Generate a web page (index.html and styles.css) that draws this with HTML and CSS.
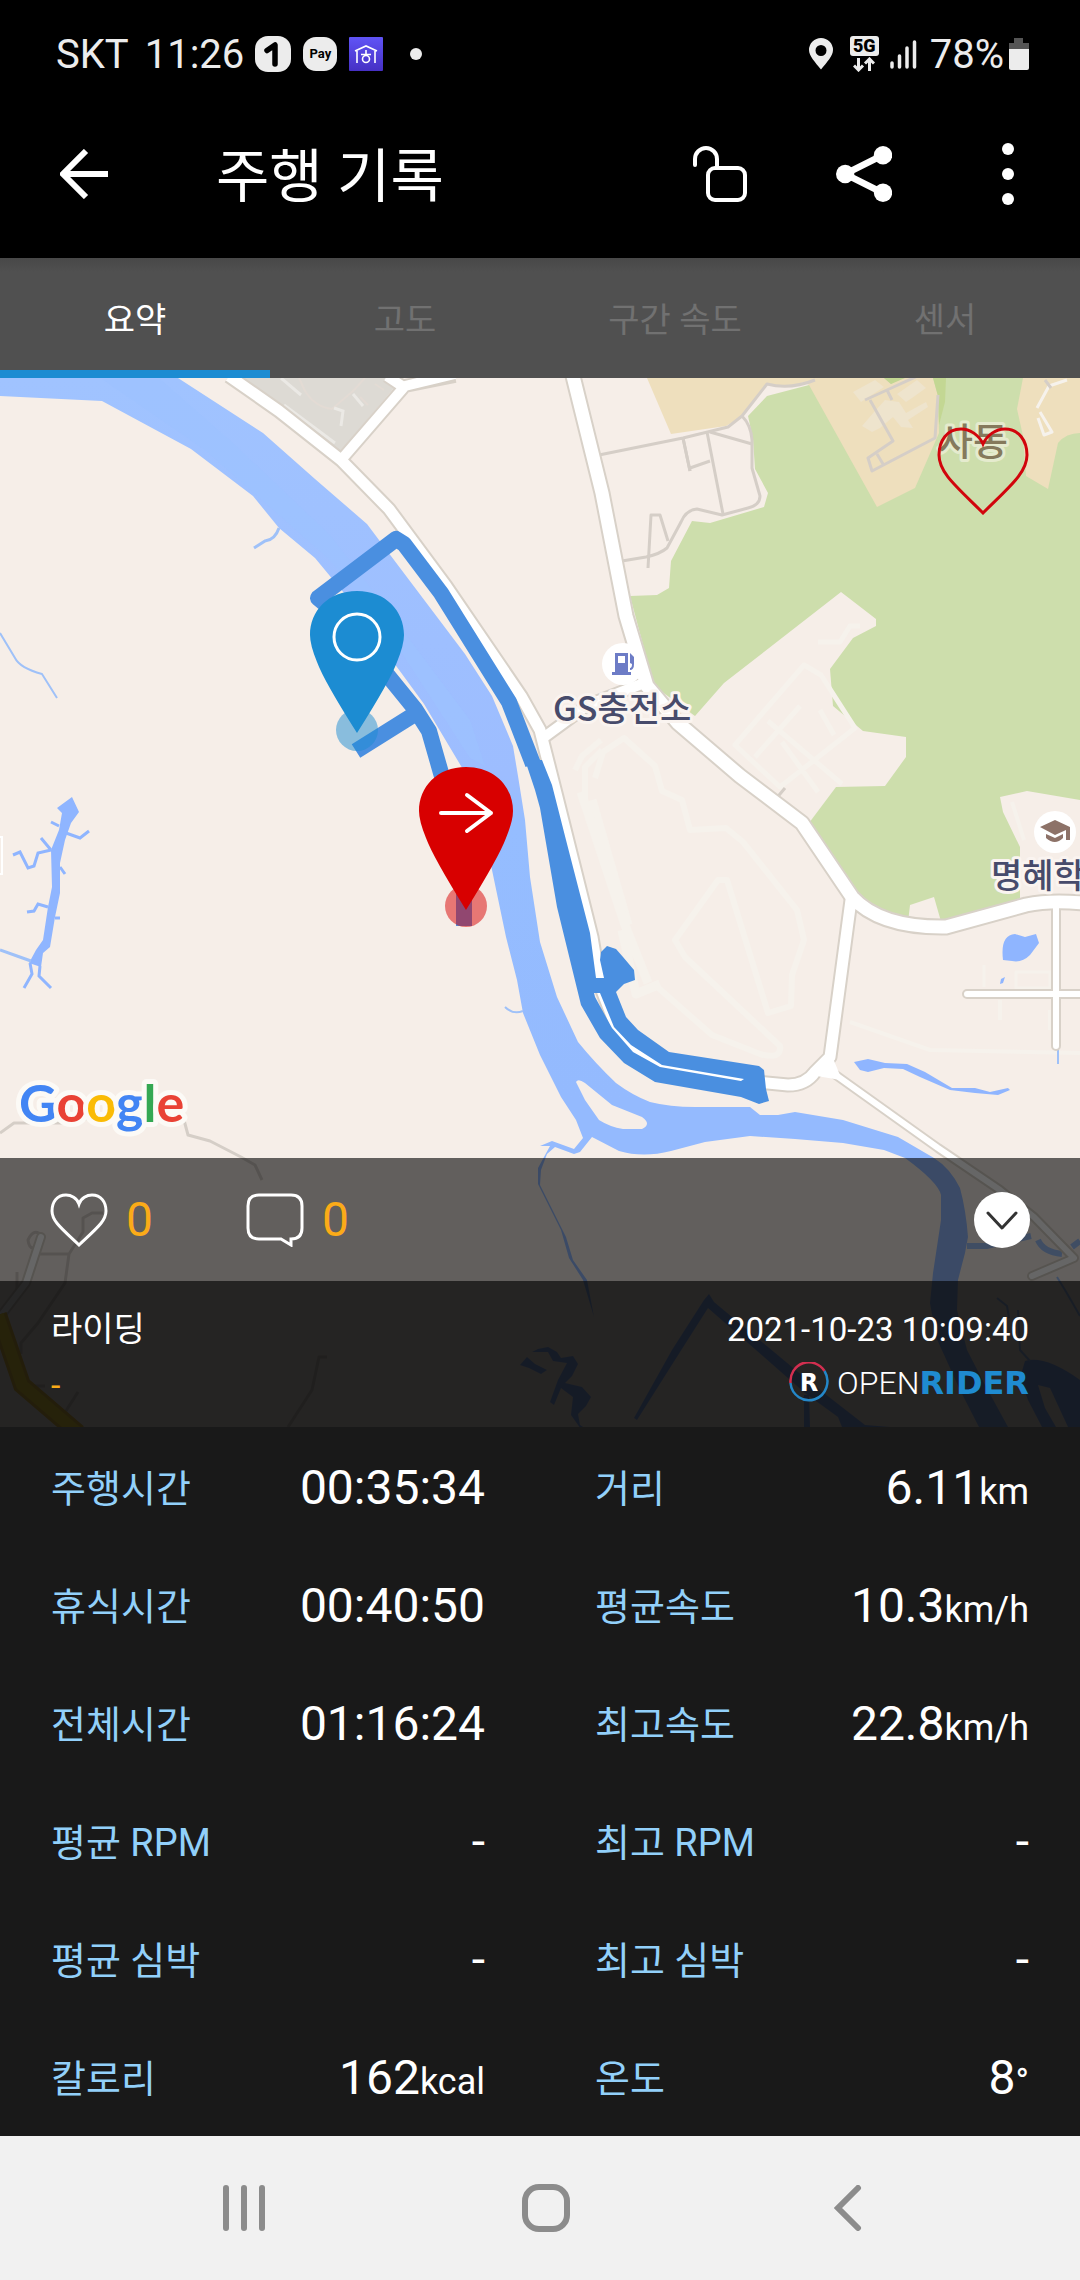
FILE: index.html
```html
<!DOCTYPE html>
<html lang="ko">
<head>
<meta charset="utf-8">
<meta name="viewport" content="width=device-width, initial-scale=1">
<title>주행 기록</title>
<link rel="stylesheet" href="styles.css">
</head>
<body>
<div class="status">
  <span>SKT</span>
  <span class="status-time">11:26</span>
  <svg class="status-app" width="36" height="36" viewBox="0 0 36 36" aria-hidden="true"><rect width="36" height="36" rx="13" fill="#ececec"/><path d="M12 14.500L20 9v19" fill="none" stroke="#000" stroke-width="5.500" stroke-linecap="round" stroke-linejoin="round"/></svg>
  <span class="pay">Pay</span>
  <svg class="status-app" width="34" height="34" viewBox="0 0 34 34" aria-hidden="true"><defs><linearGradient id="v" x2="0" y2="1"><stop stop-color="#6054f6"/><stop offset="1" stop-color="#4630c4"/></linearGradient></defs><rect width="34" height="34" rx="1" fill="url(#v)"/><path d="M6 14L17 9l11 5M8 14v12M26 14v12M17 13v4M12 17.500h10" fill="none" stroke="#fff" stroke-width="1.600"/><circle cx="17" cy="22" r="3.500" fill="none" stroke="#fff" stroke-width="1.600"/></svg>
  <span class="status-dot"></span>
  <svg class="status-loc" width="24" height="32" viewBox="0 0 24 32" aria-hidden="true"><path fill="#ececec" fill-rule="evenodd" d="M12 0a12 12 0 0 1 12 12c0 6-6 12-12 19.500C6 24 0 18 0 12A12 12 0 0 1 12 0zm0 7a5.500 5.500 0 1 0 0 11 5.500 5.500 0 0 0 0-11z"/></svg>
  <span class="network"><span class="network-type">5G</span><svg width="22" height="15" viewBox="0 0 22 15" aria-hidden="true"><path d="M5.500 1v12M1 8.500l4.500 4.500L10 8.500M16.500 14V2M12 6.500L16.500 2 21 6.500" fill="none" stroke="#ececec" stroke-width="3"/></svg></span>
  <svg class="status-signal" width="28" height="30" viewBox="0 0 28 30" aria-hidden="true"><path d="M2 24v4M9.500 17v11M17 9v19M24.500 3v25" stroke="#ececec" stroke-width="3.500" stroke-linecap="round"/></svg>
  <span class="battery-text">78%</span>
  <svg width="20" height="32" viewBox="0 0 20 32" aria-hidden="true"><path d="M5 0h9v5h6v7H0V5h5z" fill="#555"/><path d="M0 11h20v19a2 2 0 0 1-2 2H2a2 2 0 0 1-2-2z" fill="#ececec"/></svg>
</div>

<header class="appbar">
  <button class="icon-btn" aria-label="뒤로"><svg width="48" height="50" viewBox="0 0 48 50"><path d="M48 25H4M26 2L3 25l23 23" fill="none" stroke="#fff" stroke-width="6"/></svg></button>
  <h1>주행 기록</h1>
  <button class="icon-btn" aria-label="공개 설정"><svg width="54" height="56" viewBox="0 0 54 56"><g fill="none" stroke="#fff" stroke-width="4" stroke-linecap="round"><rect x="15" y="22" width="37" height="32" rx="7"/><path d="M2 19v-6a11 11 0 0 1 22 0v9"/></g></svg></button>
  <button class="icon-btn" aria-label="공유"><svg width="56" height="56" viewBox="0 0 56 56"><path d="M47 9L9 28l38 19" fill="none" stroke="#fff" stroke-width="6.500"/><g fill="#fff"><circle cx="47" cy="9.300" r="9.200"/><circle cx="9.200" cy="28" r="9.200"/><circle cx="47" cy="46.700" r="9.200"/></g></svg></button>
  <button class="icon-btn" aria-label="더보기"><svg width="12" height="62" viewBox="0 0 12 62" fill="#fff"><circle cx="6" cy="6" r="6"/><circle cx="6" cy="31" r="6"/><circle cx="6" cy="56" r="6"/></svg></button>
</header>

<nav class="tabs">
  <button class="tab active">요약</button>
  <button class="tab">고도</button>
  <button class="tab">구간 속도</button>
  <button class="tab">센서</button>
</nav>

<main class="map">
  <svg class="map-canvas" viewBox="0 378 1080 1049" preserveAspectRatio="xMidYMid slice" role="img" aria-label="주행 경로 지도">
    <defs>
      <linearGradient id="river" x1="0" y1="378" x2="0" y2="1100" gradientUnits="userSpaceOnUse"><stop stop-color="#a0c3ff"/><stop offset=".55" stop-color="#9dbdff"/><stop offset=".62" stop-color="#95bdff"/><stop offset="1" stop-color="#94bafe"/></linearGradient>
    </defs>
    <rect y="378" width="1080" height="1049" fill="#f6eee8"/>

    <!-- parks and residential blocks -->
    <path fill="#cddeac" fill-rule="evenodd" d="M748 416L767 396 809 385 820 378H1080V905L1040 905 946 927 905 922 870 908 850 885 809 823 836 787 885 786 906 757V737L863 731 833 706 830 669 853 638 876 626V619L841 592 724 683 695 716 654 686 630 596 657 595 669 588 671 561 692 521 710 523 764 507 768 493 755 469 753 439z"/>
    <path fill="#f6eee8" d="M1000 797L1027 791 1080 800V905H1020V847L1003 812zM908 922L910 905 934 897 942 925z"/>
    <g fill="#eedfbd">
      <path d="M647 378L671 434 726 426 743 416 767 384 790 387 815 378z"/>
      <path d="M795 378L809 385 877 507 915 488 939 433 938 396 933 378H902L891 384 884 378z"/>
      <path d="M1023 378L1017 409 1023 436 1026 476 1048 489 1058 443Q1066 433 1080 433V378z"/>
    </g>
    <path fill="#c3d793" d="M933 378H946L945 402 939 425 938 396zM884 378H905L891 384z"/>
    <path fill="#dddad4" d="M238 378H386L394 388 339 453 275 406z"/>
    <g fill="#eee4cd"><path d="M853 392L875 380 884 387 861 402zM897 394L917 380 926 388 912 398 906 402zM885 400L899 402 906 413 926 402 928 407 908 420 913 428 901 427 893 417 880 428 872 432 862 426 874 412z"/></g>
    <g fill="none" stroke="#e3dbd4" stroke-width="2"><path d="M299 378L305 391Q315 407 332 409M332 409L353 391 365 378M360 397l8 8M375 384l9 6"/><path stroke="#ebe9e5" stroke-width="3" d="M334 408l9 3-2 15M353 394l10 12M281 378l20 17M284 405L335 443"/></g>

    <!-- faint service roads -->
    <g fill="none" stroke="#f6f2ec" stroke-width="9" stroke-linejoin="round">
      <path d="M592 800L628 925"/><path d="M581 792L625 925 648 983 M622 930l14 64 24-10"/>
      <path d="M595 778L603 752 624 738 655 766 662 791 682 800 690 830 726 828 743 842 797 910 804 940 792 975 791 1006 768 1013 727 880 718 880 675 940 685 957 780 1046 Q782 1060 760 1054L712 1035 655 985" stroke-width="6"/>
      <path d="M575 770L582 756 601 740M585 800V767L602 750" stroke-width="6"/>
      <path d="M804 665L735 745 780 787 855 728 821 675zM755 757L800 706M768 721L842 784M782 742l36 50M820 710l14 25M818 642h22l10-16h10" stroke-width="5"/>
      <path d="M1012 802L1024 840M1000 1000v20M1050 1010v20M850 1022L930 1050 1080 1053" stroke-width="4"/>
      <path d="M1016 972h34v16h-34zM984 965v22M1038 418l6 17 8-3-12-20M1037 408l12-22 18-6" stroke-width="3"/>
    </g>

    <!-- river and ponds -->
    <path fill="url(#river)" fill-rule="evenodd" d="M0 378H178L263 433 315 479 367 524 391 556 465 654 492 696 513 746 518 776 525 820 530 877 540 942 557 997 578 1042Q595 1063 616 1083 632 1095 650 1102 670 1107 695 1107H750L760 1115 778 1115 795 1112 843 1120 898 1137 934 1158Q950 1168 960 1188 966 1210 968 1237L965 1253 958 1280 957 1310 967 1350 984 1383 1008 1427H979L960 1390 936 1337 930 1303 933 1273 941 1220V1195Q938 1182 905 1158L884 1150 843 1143 795 1139 750 1136 705 1142 671 1151Q643 1158 619 1151L592 1137 580 1152 574 1154 555 1147 547 1154 541 1170 540 1185 566 1237 573 1260 587 1280 594 1317 583 1280 569 1258 561 1230 538 1184V1168L550 1146 540 1146 552 1141 574 1149 583 1138 576 1120 561 1097 540 1055 523 1013 517 980 506 937 492 870 475 793 461 766 424 704 394 663 344 593 315 558 279 528 253 496 191 449 102 401 0 396zM576 1082Q578 1078 585 1083L612 1105 642 1117Q652 1124 642 1129H623Q610 1127 599 1120L585 1100z"/>
    <path fill="#9cc2ff" d="M102 379H160L235 445 330 535 395 620 470 720 485 766 470 758 400 650 330 560 205 450z" opacity=".7"/>
    <g fill="#8fb5ff">
      <path d="M72 797L79 812 71 823 65 840 60 863V893L55 917 50 947 43 953 41 967 29 963 36 950 43 940 48 907 52 887 51 850 59 830 62 813 57 808z"/>
      <path d="M1003 960Q1000 935 1015 934L1025 937 1036 934 1039 943 1030 955Q1022 963 1012 961zM1001 979l4-2-2 6-3 1zM854 1062L868 1059 885 1063 907 1064 925 1072 952 1088 975 1088 990 1092 1008 1088 1010 1090 998 1095 975 1093 950 1090 920 1077 903 1069 884 1068 868 1072 860 1070z"/>
      <path d="M520 1365l7-8 8 7 12 6-6 4-12-6zM532 1352l6-3 10-2 9 5 4 6 12-2 5 8-6 12-7 7 17 4 9 10-5 9-8 8 2 11 14 9 14 2 3 5-12-1-16-8-12-17 2-18-12-9-7 17-4-3 8-22 9-17-14-2-5-9-14 0z"/>
      <path d="M704 1300L709 1294 714 1302 756 1337 798 1372 829 1397 865 1425 890 1427H842L838 1417 805 1393 708 1308 680 1352 637 1420 634 1418 672 1350zM804 1395h5l1 32h-6zM1025 1361Q1045 1355 1080 1380V1427H1068L1050 1388 1038 1385 1045 1408 1056 1427H1042L1028 1400 1020 1378z"/>
    </g>
    <g fill="none" stroke="#9fc1f8" stroke-width="2">
      <path d="M0 633L15 658Q20 668 42 674L57 698"/><path stroke-width="3" d="M279 528Q275 540 265 541L254 548M0 950l17 6 14 5"/>
      <path stroke="#8fb5ff" stroke-width="3" d="M66 833l14 5 9-7M60 867l5 7M51 850L41 838M51 850L38 853 34 866 28 868 20 852 13 855M48 907L38 904 34 911 27 912M59 826l-8-4M55 918h5M30 963l2 11-8 14M40 966l-1 10 12 12"/>
      <path d="M505 1007q8 8 18 4M1058 1050v14M997 1298l10 8 2 12M1057 1277l8 13 7 12 8 14M1018 1310l2 40 10 11"/>
      <path stroke-width="6" d="M967 1246h20l44-10M1038 1240q5 12 24 14M1072 1247l8-6"/>
    </g>

    <!-- minor roads -->
    <g fill="none" stroke="#d5cec7" stroke-width="3" stroke-linejoin="round">
      <path d="M599 455L683 438 728 427 742 416 767 384Q790 390 815 380M742 416Q751 425 752 440V468L760 496Q760 505 748 508L722 515 697 509Q686 510 681 522L667 548Q660 554 646 557L622 561M683 438L690 471M710 432L752 444"/>
      <path d="M683 438L690 471M690 468L710 461M707 432L723 514M648 568L651 515H660L668 541"/>
      <path d="M865 400L887 390 922 374M887 390l5 10M870 400L893 441 868 458 872 471 935 438 938 395M877 454l6 10M775 800l10-12M1045 380l6 8"/>
      <path d="M0 1133L14 1123 62 1123 90 1118 184 1120 188 1135 210 1141 241 1157 255 1165 262 1180M103 1213H92L83 1218V1232L69 1254H40M69 1254L65 1283 38 1323 21 1343V1354M327 1357h-8L312 1390 288 1427M17 1272v20M78 1392l-14 22M30 1386h15M42 1236q-8-9-14 4 1 8 5 8"/>
    </g>

    <!-- road casings followed by road fills -->
    <g fill="none" stroke="#d8d1c8" stroke-linejoin="round">
      <path stroke-width="15" d="M229 376L279 411 341 460 389 509 446 586 521 696 540 730 556 793 592 937 600 985 620 1037 660 1065 745 1081 788 1085Q806 1085 815 1072L830 1057 851 900"/>
      <path stroke-width="14" d="M341 460L405 386 455 376M387 376L405 388M543 738L588 705 644 683"/>
      <path stroke-width="17" d="M573 376L602 493 626 616 647 686 678 723 740 776 802 823 852 897Q880 928 946 927L1026 905Q1050 900 1082 903"/>
      <path stroke-width="10" stroke-linecap="round" d="M1056 905V1046M967 994H1082M833 1073L938 1148 1000 1190 1034 1217 1074 1258 1032 1276M41 1237L26 1283 0 1317"/>
    </g>
    <g fill="none" stroke="#fff" stroke-linejoin="round">
      <path stroke-width="11" d="M229 376L279 411 341 460 389 509 446 586 521 696 540 730 556 793 592 937 600 985 620 1037 660 1065 745 1081 788 1085Q806 1085 815 1072L830 1057 851 900"/>
      <path stroke-width="10" d="M341 460L405 386 455 374M387 376L405 388M543 738L588 705 644 683"/>
      <path stroke-width="13" d="M573 376L602 493 626 616 647 686 678 723 740 776 802 823 852 897Q880 928 946 927L1026 905Q1050 900 1082 903"/>
      <path stroke-width="6" stroke-linecap="round" d="M1056 905V1046M967 994H1082M833 1073L938 1148 1000 1190 1034 1217 1074 1258 1032 1276M41 1237L26 1283 0 1317"/>
      <path stroke-width="5" fill="#fff" d="M820 1074L838 1077 831 1060z"/>
    </g>
    <path d="M-2 1315L22 1385 78 1433" fill="none" stroke="#e6c14a" stroke-width="18"/><path d="M-2 1315L22 1385 78 1433" fill="none" stroke="#fae044" stroke-width="12"/>

    <!-- places -->
    <circle cx="623" cy="664" r="21" fill="#fff"/>
    <path fill="#6d7cc6" fill-rule="evenodd" d="M615 653h13v19h3v3h-19v-3h3zm3 3v7h7v-7zM630 653l4 4v7q0 6-4 6v-2q2 0 2-4l-2-1z"/>
    <circle cx="1055" cy="832" r="21" fill="#fff"/>
    <path fill="#8d7268" d="M1040 827l15-7 15 7v13h-4v-10l-11 5zM1046 834l9 4 8-4v4q-8 8-17 0z"/>
    <g class="place">
      <text class="place-district" x="938" y="455">사동</text>
      <text x="553" y="721">GS충전소</text>
      <text x="991" y="888">명혜학</text>
    </g>
    <path d="M0 837h2v37H0" fill="none" stroke="#fff" stroke-width="2"/>

    <!-- recorded track -->
    <g fill="none" stroke="#4a8fe0" stroke-width="16" stroke-linejoin="round">
      <path d="M340 620L389 677 415 709 429 731 441 773 464 850V926M415 714L356 751"/>
      <path d="M335 612L318 598 322 595 396 539 404 544 441 593 509 702 533 764"/>
    </g>
    <path fill="#4a8fe0" fill-rule="evenodd" d="M525 760L535 790 540 808 557 907 581 1005 600 1038 624 1063 655 1082 741 1097 759 1104 769 1101 766 1089 764 1070 759 1066 669 1052 638 1030 626 1017 616 992 624 984 635 980 634 970 623 957 616 949 607 946 601 952 600 960 604 978 596 978 590 933 566 840 552 785 542 760zM594 993H600L614 1027 631 1045 662 1065 744 1079 741 1081 660 1067 633 1052 612 1028 595 997z"/>

    <!-- start and finish -->
    <circle cx="357" cy="730" r="21" fill="#1c8cd2" opacity=".5"/>
    <path fill="#1c8cd2" d="M357 591C386 591 404 611 404 635Q404 645 397 662 390 681 357 733 324 681 317 662 310 645 310 635C310 611 328 591 357 591z"/>
    <circle cx="357" cy="637" r="23" fill="none" stroke="#fff" stroke-width="3"/>
    <circle cx="466" cy="906" r="21" fill="#d80000" opacity=".5"/>
    <path fill="#d80000" d="M466 767C495 767 513 787 513 811Q513 821 506 838 499 857 466 910 433 857 426 838 419 821 419 811C419 787 437 767 466 767z"/>
    <path d="M441 813H491M467 795L491 813 467 831" fill="none" stroke="#fff" stroke-width="4" stroke-linecap="round" stroke-linejoin="round"/>
    <text class="google" x="19" y="1122"><tspan fill="#4285f4">G</tspan><tspan fill="#e94235">o</tspan><tspan fill="#fabb05">o</tspan><tspan fill="#4285f4">g</tspan><tspan fill="#34a853">l</tspan><tspan fill="#e94235">e</tspan></text>
  </svg>

  <button class="icon-btn favorite" aria-label="좋아요"><svg width="92" height="88" viewBox="0 0 92 88"><path d="M46 17C42 8 33 2 24 2 10 2 2 14 2 28 2 46 20 60 46 86 72 60 90 46 90 28 90 14 82 2 68 2 59 2 50 8 46 17z" fill="none" stroke="#d1050c" stroke-width="3"/></svg></button>

  <div class="panel">
    <div class="social">
      <button class="count"><svg width="58" height="54" viewBox="0 0 58 54"><path d="M29 11C27 5 21 2 16 2 7 2 2 9 2 18 2 28 11 35 29 52 47 35 56 28 56 18 56 9 51 2 42 2 37 2 31 5 29 11z" fill="none" stroke="#fff" stroke-width="3"/></svg><span>0</span></button>
      <button class="count"><svg width="58" height="54" viewBox="0 0 58 54"><path d="M13 2h32q11 0 11 11v22q0 11-11 11v6l-10-6H13Q2 46 2 35V13Q2 2 13 2z" fill="none" stroke="#fff" stroke-width="3"/></svg><span>0</span></button>
      <button class="icon-btn collapse" aria-label="접기"><svg width="56" height="56" viewBox="0 0 56 56"><circle cx="28" cy="28" r="28" fill="#fff"/><path d="M14 21l14 15 14-15" fill="none" stroke="#333" stroke-width="3" stroke-linecap="round" stroke-linejoin="round"/></svg></button>
    </div>
    <div class="ride">
      <div><p>라이딩</p><p class="note">-</p></div>
      <div>
        <time datetime="2021-10-23T10:09:40">2021-10-23 10:09:40</time>
        <div class="brand"><span class="brand-mark"><svg width="40" height="42" viewBox="0 0 40 42" aria-hidden="true"><g fill="none" stroke-width="2.500"><path d="M1.500 21A18.500 19 0 0 1 35.500 9" stroke="#d32f50"/><path d="M35.500 9A18.500 19 0 1 1 1.500 21" stroke="#2487c8"/></g></svg><b>R</b></span><span class="brand-open">OPEN</span><b class="brand-rider">RIDER</b></div>
      </div>
    </div>
  </div>
</main>

<dl class="stats">
  <div><dt>주행시간</dt><dd>00:35:34</dd></div>
  <div><dt>거리</dt><dd>6.11<small>km</small></dd></div>
  <div><dt>휴식시간</dt><dd>00:40:50</dd></div>
  <div><dt>평균속도</dt><dd>10.3<small>km/h</small></dd></div>
  <div><dt>전체시간</dt><dd>01:16:24</dd></div>
  <div><dt>최고속도</dt><dd>22.8<small>km/h</small></dd></div>
  <div><dt>평균 RPM</dt><dd>-</dd></div>
  <div><dt>최고 RPM</dt><dd>-</dd></div>
  <div><dt>평균 심박</dt><dd>-</dd></div>
  <div><dt>최고 심박</dt><dd>-</dd></div>
  <div><dt>칼로리</dt><dd>162<small>kcal</small></dd></div>
  <div><dt>온도</dt><dd>8<small>°</small></dd></div>
</dl>

<footer class="sysnav">
  <button class="icon-btn" aria-label="최근 앱"><svg width="42" height="46" viewBox="0 0 42 46"><path d="M3 3v40M21 3v40M39 3v40" stroke="#8c8c8c" stroke-width="6" stroke-linecap="round"/></svg></button>
  <button class="icon-btn" aria-label="홈"><svg width="48" height="48" viewBox="0 0 48 48"><rect x="3" y="3" width="42" height="42" rx="14" fill="none" stroke="#8c8c8c" stroke-width="6"/></svg></button>
  <button class="icon-btn" aria-label="뒤로 가기"><svg width="28" height="46" viewBox="0 0 28 46"><path d="M24 3L4 23l20 20" fill="none" stroke="#8c8c8c" stroke-width="6" stroke-linecap="round"/></svg></button>
</footer>
</body>
</html>
```
FILE: styles.css
```css
* {
  box-sizing: border-box;
}

body {
  margin: 0;
  min-height: 100vh;
  display: flex;
  flex-direction: column;
  background: #191919;
  color: #fff;
  font-family: Roboto, "Noto Sans CJK KR", sans-serif;
  font-size: 34px;
}

svg {
  display: block;
  flex: none;
}

button {
  border: 0;
  padding: 0;
  background: none;
  color: inherit;
  font: inherit;
}

h1,
p,
dl,
dd {
  margin: 0;
}

.status {
  display: flex;
  align-items: center;
  height: 108px;
  padding: 0 51px 0 56px;
  background: #000;
  color: #ececec;
  font-size: 40px;
}

.status-time {
  margin: 0 11px 0 16px;
}

.status-app {
  margin-right: 12px;
}

.pay {
  width: 34px;
  margin-right: 12px;
  border-radius: 13px;
  background: #ececec;
  color: #000;
  font-size: 13px;
  font-weight: 700;
  line-height: 34px;
  text-align: center;
}

.status-dot {
  width: 12px;
  height: 12px;
  margin-left: 15px;
  border-radius: 50%;
  background: #ececec;
}

.status-loc {
  margin-left: auto;
}

.network {
  display: grid;
  justify-items: center;
  gap: 1px;
  width: 29px;
  margin-left: 17px;
}

.network-type {
  width: 100%;
  border-radius: 3px;
  background: #ececec;
  color: #000;
  font-size: 18px;
  font-weight: 900;
  line-height: 20px;
  text-align: center;
}

.status-signal {
  margin: 0 12px 0 11px;
}

.battery-text {
  margin-right: 5px;
}

.appbar {
  display: flex;
  align-items: center;
  height: 150px;
  padding: 0 66px 18px 60px;
  background: #000;
}

.appbar h1 {
  flex: 1;
  margin-left: 108px;
  padding-top: 6px;
  font-size: 58px;
  font-weight: 400;
  line-height: 70px;
}

.appbar h1 ~ .icon-btn {
  margin-left: 89px;
}

.appbar .icon-btn:last-child {
  margin-left: 110px;
}

.tabs {
  display: grid;
  grid-template-columns: repeat(4, 1fr);
  height: 120px;
  background: linear-gradient(#484848, #505050 14px);
}

.tab {
  padding-top: 6px;
  border-bottom: 8px solid transparent;
  color: #717171;
}

.tab.active {
  border-color: #1c8cd2;
  color: #fff;
}

.map {
  position: relative;
  flex: 1 0 auto;
  display: flex;
  flex-direction: column;
  justify-content: space-between;
  min-height: 800px;
}

.map-canvas {
  position: absolute;
  inset: 0;
  width: 100%;
  height: 100%;
}

.place {
  fill: #474b6b;
  stroke: #faf4f0;
  stroke-width: 6px;
  stroke-linejoin: round;
  paint-order: stroke;
  font-size: 34px;
  font-family: "Noto Sans CJK KR", sans-serif;
  font-weight: 500;
}

.place-district {
  fill: #857a5c;
  stroke: #e5ebce;
  font-size: 38px;
}

.google {
  font-family: Lato, sans-serif;
  font-size: 52px;
  font-weight: 700;
  stroke: #fcfaf6;
  stroke-width: 10px;
  stroke-linejoin: round;
  paint-order: stroke;
}

.favorite {
  position: relative;
  align-self: flex-end;
  margin: 49px 51px 0 0;
}

.panel {
  position: relative;
}

.social {
  display: flex;
  align-items: center;
  gap: 93px;
  height: 123px;
  padding: 0 50px;
  background: rgba(0, 0, 0, 0.6);
}

.count {
  display: flex;
  align-items: center;
  gap: 18px;
  color: #fbab18;
  font-size: 48px;
}

.collapse {
  margin-left: auto;
}

.ride {
  display: flex;
  justify-content: space-between;
  height: 146px;
  padding: 24px 51px 0;
  background: rgba(0, 0, 0, 0.85);
  line-height: 48px;
}

.ride time {
  font-size: 33px;
}

.note {
  color: #fbab18;
  margin-top: 8px;
}

.brand {
  display: flex;
  align-items: center;
  justify-content: flex-end;
  height: 42px;
  margin-top: 8px;
  font-size: 32px;
}

.brand-mark {
  display: grid;
  place-items: center;
  margin-right: 8px;
  font-size: 24px;
  line-height: 24px;
}

.brand-mark > * {
  grid-area: 1 / 1;
}

.brand-open {
  font-weight: 300;
}

.brand-mark b,
.brand-rider {
  font-family: "DejaVu Sans", sans-serif;
}

.brand-rider {
  color: #1f8bd0;
}

.stats {
  display: grid;
  grid-template-columns: 1fr 1fr;
  grid-auto-rows: 118px;
  column-gap: 110px;
  padding: 0 51px 1px;
}

.stats > div {
  display: flex;
  align-items: center;
  justify-content: space-between;
}

.stats dt {
  padding-bottom: 2px;
  color: #92d0fa;
  font-size: 38px;
}

.stats dd {
  padding-top: 2px;
  font-size: 48px;
}

.stats small {
  font-size: 36px;
}

.sysnav {
  display: grid;
  grid-template-columns: repeat(3, 1fr);
  place-items: center;
  height: 144px;
  padding: 0 81px 0 93px;
  background: #f1f1f1;
}
```
